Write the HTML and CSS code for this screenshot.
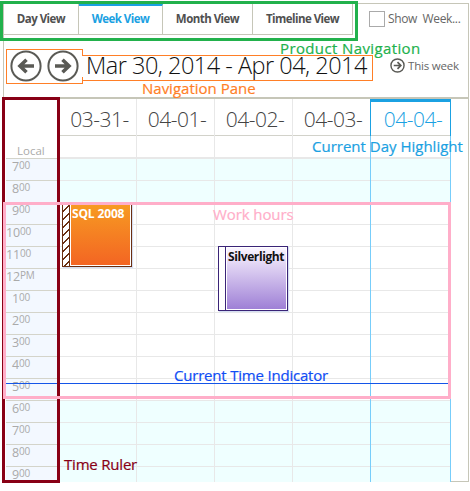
FILE: index.html
```html
<!DOCTYPE html>
<html lang="en">
<head>
<meta charset="utf-8">
<title>Schedule week view</title>
<link rel="stylesheet" href="styles.css">
</head>
<body>
<main class="scheduler">
  <header class="toolbar">
    <nav class="tabs">
      <span class="tab tab-day"><b>Day View</b></span>
      <span class="tab tab-week active"><b>Week View</b></span>
      <span class="tab tab-month"><b>Month View</b></span>
      <span class="tab tab-timeline"><b>Timeline View</b></span>
    </nav>
    <label class="show-week"><i class="box"></i><span>Show&nbsp; Week...</span></label>
  </header>
  <section class="range">
    <svg class="arrow" viewBox="0 0 32 32"><circle cx="16" cy="16" r="14.6"/><path d="M24 16H10M16.500 9.800L10 16l6.500 6.200"/></svg>
    <svg class="arrow" viewBox="0 0 32 32"><circle cx="16" cy="16" r="14.6"/><path d="M8 16h14M15.500 9.800L22 16l-6.500 6.200"/></svg>
    <h1 class="dates">Mar 30, 2014 - Apr 04, 2014</h1>
    <svg class="arrow small" viewBox="0 0 32 32"><circle cx="16" cy="16" r="14"/><path d="M8 16h15M16 9l7 7-7 7"/></svg>
    <span class="this-week">This week</span>
  </section>
  <section class="calendar">
    <div class="ruler">
      <div class="local">Local</div>
      <div class="hour">7<sup>00</sup></div><div class="hour">8<sup>00</sup></div><div class="hour">9<sup>00</sup></div><div class="hour wide">10<sup>00</sup></div><div class="hour wide">11<sup>00</sup></div><div class="hour wide">12<sup>PM</sup></div><div class="hour">1<sup>00</sup></div><div class="hour">2<sup>00</sup></div><div class="hour">3<sup>00</sup></div><div class="hour">4<sup>00</sup></div><div class="hour">5<sup>00</sup></div><div class="hour">6<sup>00</sup></div><div class="hour">7<sup>00</sup></div><div class="hour">8<sup>00</sup></div><div class="hour">9<sup>00</sup></div>
    </div>
    <div class="day"><div class="date">03-31-</div><div class="allday"></div><div class="slots"></div></div>
    <div class="day"><div class="date">04-01-</div><div class="allday"></div><div class="slots"></div></div>
    <div class="day"><div class="date">04-02-</div><div class="allday"></div><div class="slots"></div></div>
    <div class="day"><div class="date">04-03-</div><div class="allday"></div><div class="slots"></div></div>
    <div class="day today"><div class="date">04-04-</div><div class="allday"></div><div class="slots"></div></div>
  </section>
</main>

<div class="event sql"><i class="strip"></i><div class="body">SQL 2008</div></div>
<div class="event silver"><i class="strip"></i><div class="body">Silverlight</div></div>

<div class="mark time-line"></div>
<div class="mark product-box"></div>
<div class="mark arrows-box"></div>
<div class="mark dates-box"></div>
<div class="mark ruler-box"></div>
<div class="mark work-box"></div>
<span class="note n-product">Product Navigation</span>
<span class="note n-pane">Navigation Pane</span>
<span class="note n-day">Current Day Highlight</span>
<span class="note n-work">Work hours</span>
<span class="note n-time">Current Time Indicator</span>
<span class="note n-ruler">Time Ruler</span>
</body>
</html>
```
FILE: styles.css
```css
* { box-sizing: border-box; }
body { margin: 0; width: 470px; height: 491px; overflow: hidden; position: relative; background: #fff; font-family: "Open Sans", "Noto Sans", sans-serif; color: #555; }
.scheduler { margin: 3px 0 0 3px; width: 466px; height: 479px; border: 1px solid #c6c6b8; }
.toolbar { display: flex; height: 45px; }
.tabs { display: flex; width: 349px; height: 31px; border-bottom: 1px solid #c6c6b8; }
.tab { border-right: 1px solid #c6c6b8; display: flex; align-items: center; justify-content: center; padding-bottom: 1px; font-size: 11.5px; letter-spacing: -.54px; color: #505050; white-space: nowrap; }
.tab-day { width: 75px; }
.tab-week { width: 84px; }
.tab-month { width: 90px; }
.tab-timeline { width: 100px; }
.active { border-top: 2px solid #1ba1e2; padding-bottom: 3px; color: #1ba1e2; }
.tab b { font-weight: 700; }
.show-week { display: flex; align-items: center; height: 30px; margin-left: 16px; gap: 3px; font-size: 12px; letter-spacing: -.35px; color: #666; white-space: nowrap; }
.show-week span { padding-bottom: 1px; }
.box { width: 16px; height: 16px; border: 1px solid #aaa; }
.range { display: flex; align-items: center; height: 33px; padding-left: 6px; }
.arrow { width: 32px; height: 32px; margin-right: 5px; flex: none; fill: none; stroke: #5a5a55; stroke-width: 2; }
.arrow path { stroke-width: 3.6; }
.dates { margin: 0 0 0 2px; width: 304px; font-size: 23.500px; letter-spacing: -.5px; font-weight: 300; line-height: 31px; color: #111; white-space: nowrap; }
.small { width: 15px; height: 15px; margin: 0 3px 0 0; stroke-width: 3; }
.this-week { font-size: 11.5px; letter-spacing: -.2px; color: #666; white-space: nowrap; }
.calendar { display: flex; margin-top: 15px; height: 385px; border-top: 2px solid #c6c6b8; }
.ruler { width: 56px; padding-left: 2px; background: #fff; overflow: hidden; }
.local { height: 60px; padding: 43px 0 0 11px; border-bottom: 1px solid #d4d4ca; font-size: 11.5px; line-height: 17px; color: #aaa; }
.hour { height: 22px; border-bottom: 1px solid #d4d4ca; background: #f3f8ff; padding-left: 6px; font-size: 12.5px; line-height: 15px; letter-spacing: -.2px; color: #aaa; }
.wide { padding-left: 0; }
.hour sup { font-size: 10px; line-height: 0; vertical-align: 2px; }
.day { width: 78px; height: 383px; display: flex; flex-direction: column; border-right: 1px solid #e8e8e8; }
.day:nth-child(2) { width: 77px; }
.date { height: 37px; padding-left: 3px; border-bottom: 1px solid #d2d2ca; font-size: 21px; letter-spacing: -.5px; font-weight: 300; line-height: 41px; text-align: center; color: #444; white-space: nowrap; }
.allday { height: 23px; border-bottom: 2px solid #e8e8e8; }
.slots { flex: 1; background: repeating-linear-gradient(to bottom, transparent 0 21px, #e8e8e8 21px 22px), linear-gradient(to bottom, #efffff 0 43px, #fff 43px 241px, #efffff 241px); }
.day:nth-child(5) { border-right-color: #77cdfa; }
.today { width: 80px; border-right-color: #77cdfa; }
.today .date { border-top: 3px solid #1ba1e2; padding-left: 5px; color: #1ba1e2; line-height: 35px; box-shadow: -1px 0 #1ba1e2, 1px 0 #1ba1e2; }
.event { position: absolute; width: 70px; display: flex; background: #fff; box-shadow: 1px 1px 1px #d5def2; }
.sql { left: 62px; top: 203px; height: 64px; border: 1px solid #6b2f11; }
.silver { left: 218px; top: 246px; height: 65px; border: 1px solid #3a2477; }
.strip { width: 7px; border-right: 1px solid; border-color: inherit; }
.sql .strip { background: repeating-linear-gradient(135deg, #fff 0 4.400px, #6b2f11 4.400px 5.660px); }
.body { flex: 1; margin: 1px; font-size: 12px; font-weight: 700; letter-spacing: -.4px; line-height: 18px; white-space: nowrap; padding-left: 1px; }
.sql .body { background: linear-gradient(#f79a22, #f36523); color: #fff; letter-spacing: -.15px; line-height: 17px; }
.silver .body { background: linear-gradient(#faf5ff, #9f80d6); color: #111; }
.mark { position: absolute; }
.product-box { left: 0; top: 1px; width: 358px; height: 40px; border: 3px solid #22b14c; }
.arrows-box { left: 6px; top: 49px; width: 77px; height: 35px; border: 1px solid #ff7f27; border-right: 0; }
.arrows-box::after { content: ""; position: absolute; right: 0; top: -1px; width: 1px; height: 7px; background: #ff7f27; box-shadow: 0 28px #ff7f27; }
.dates-box { left: 82px; top: 55px; width: 291px; height: 26px; border: 1px solid #ff7f27; border-left: 0; }
.ruler-box { left: 2px; top: 97px; width: 58px; height: 386px; border: 3px solid #880015; }
.work-box { left: 3px; top: 202px; width: 448px; height: 197px; border: 3px solid #ffaec9; }
.time-line { left: 6px; top: 383px; width: 442px; height: 1px; background: #1455e8; }
.note { position: absolute; font-size: 15px; line-height: 20px; white-space: nowrap; -webkit-text-stroke: .2px; }
.n-product { left: 280px; top: 38px; letter-spacing: .38px; color: #22b14c; }
.n-pane { left: 142px; top: 78px; color: #ff7f27; }
.n-day { left: 312px; top: 136px; color: #1ba1e2; }
.n-work { left: 213px; top: 204px; letter-spacing: -.1px; color: #ffaec9; }
.n-time { left: 174px; top: 365px; letter-spacing: -.2px; color: #0f4df5; }
.n-ruler { left: 64px; top: 454px; letter-spacing: -.2px; color: #880015; }
```
